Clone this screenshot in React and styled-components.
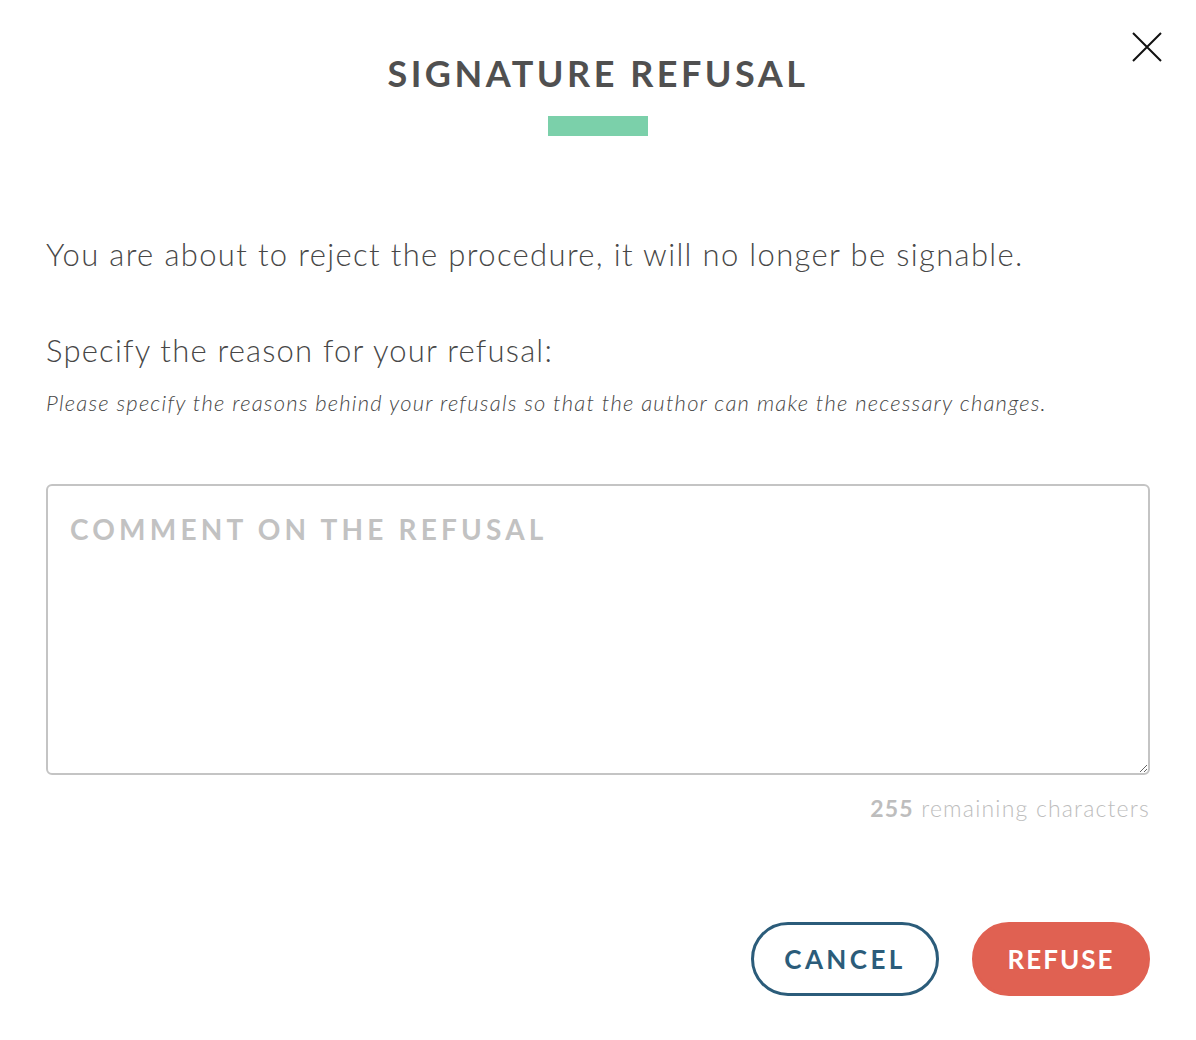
import React, { useState } from "react";
import styled, { createGlobalStyle } from "styled-components";

const GlobalStyle = createGlobalStyle`
    html, body {
        margin: 0;
        padding: 0;
        background: #ffffff;
    }
    * {
        box-sizing: border-box;
    }
`;

const MAX_CHARS = 255;

const Modal = styled.div`
    width: 1196px;
    min-height: 1040px;
    padding: 0 46px;
    position: relative;
    background: #ffffff;
    font-family: "Lato", "Liberation Sans", sans-serif;
    color: #4a4a4a;
`;

const CloseButton = styled.button`
    position: absolute;
    top: 31px;
    right: 33px;
    width: 32px;
    height: 32px;
    padding: 0;
    border: none;
    background: none;
    cursor: pointer;
`;

const Header = styled.header`
    display: flex;
    flex-direction: column;
    align-items: center;
    padding-top: 53px;
`;

const Title = styled.h1`
    margin: 0;
    font-family: "Lato", "Liberation Sans", sans-serif;
    font-weight: 700;
    font-size: 36px;
    line-height: 40px;
    letter-spacing: 3.5px;
    color: #505050;
`;

const Accent = styled.div`
    width: 100px;
    height: 20px;
    margin-top: 23px;
    background: #7bd0aa;
`;

const Lead = styled.p`
    margin: 98px 0 0;
    font-size: 31px;
    font-weight: 300;
    line-height: 40px;
    letter-spacing: 1.35px;
    color: #474747;
`;

const Label = styled.p`
    margin: 56px 0 0;
    font-size: 31px;
    font-weight: 300;
    line-height: 40px;
    letter-spacing: 1.2px;
    color: #474747;
`;

const Hint = styled.p`
    margin: 19px 0 0;
    font-size: 22px;
    font-style: italic;
    font-weight: 300;
    line-height: 28px;
    letter-spacing: 1.2px;
    color: #474747;
`;

const Comment = styled.textarea`
    display: block;
    width: 100%;
    height: 291px;
    margin-top: 67px;
    padding: 26px 22px;
    border: 2px solid #c4c4c4;
    border-radius: 6px;
    resize: vertical;
    outline: none;
    font-family: "Lato", "Liberation Sans", sans-serif;
    font-size: 28px;
    color: #4d4d4d;

    &::placeholder {
        color: #c2c2c2;
        font-weight: 700;
        letter-spacing: 4.2px;
        text-transform: uppercase;
    }
`;

const Counter = styled.div`
    margin-top: 19px;
    text-align: right;
    font-size: 23px;
    font-weight: 300;
    letter-spacing: 1.2px;
    color: #bdbdbd;

    b {
        font-weight: 700;
    }
`;

const Actions = styled.div`
    display: flex;
    justify-content: flex-end;
    gap: 33px;
    margin-top: 100px;
`;

const Button = styled.button`
    height: 74px;
    padding: 0;
    width: ${(p) => p.$width}px;
    border-radius: 37px;
    border: 3px solid ${(p) => (p.$primary ? "#e06152" : "#2b5c7a")};
    background: ${(p) => (p.$primary ? "#e06152" : "#ffffff")};
    color: ${(p) => (p.$primary ? "#ffffff" : "#2b5c7a")};
    font-family: "Lato", "Liberation Sans", sans-serif;
    font-weight: 700;
    font-size: 26px;
    letter-spacing: ${(p) => p.$spacing}px;
    cursor: pointer;
`;

export default function App() {
    const [comment, setComment] = useState("");

    return (
        <>
            <GlobalStyle />
            <Modal>
                <CloseButton aria-label="Close">
                    <svg width="32" height="32" viewBox="0 0 32 32">
                        <path d="M2 2 L30 30 M30 2 L2 30" stroke="#111" strokeWidth="2" fill="none" />
                    </svg>
                </CloseButton>
                <Header>
                    <Title>SIGNATURE REFUSAL</Title>
                    <Accent />
                </Header>
                <Lead>You are about to reject the procedure, it will no longer be signable.</Lead>
                <Label>Specify the reason for your refusal:</Label>
                <Hint>Please specify the reasons behind your refusals so that the author can make the necessary changes.</Hint>
                <Comment
                    placeholder="Comment on the refusal"
                    maxLength={MAX_CHARS}
                    value={comment}
                    onChange={(e) => setComment(e.target.value)}
                />
                <Counter>
                    <b>{MAX_CHARS - comment.length}</b> remaining characters
                </Counter>
                <Actions>
                    <Button $width={188} $spacing={3.4}>CANCEL</Button>
                    <Button $width={178} $spacing={2.0} $primary>REFUSE</Button>
                </Actions>
            </Modal>
        </>
    );
}
